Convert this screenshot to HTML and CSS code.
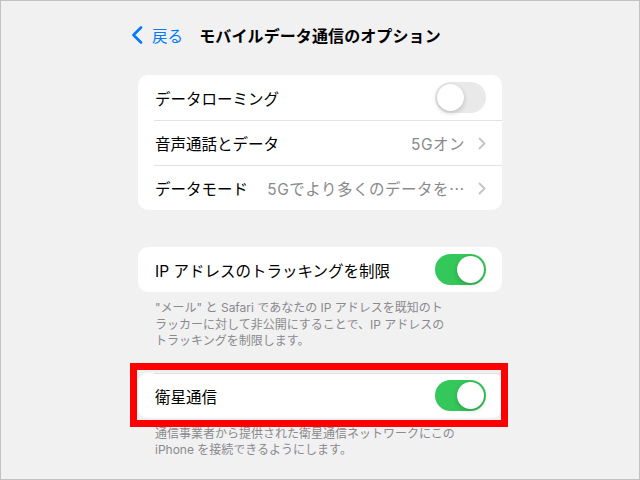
FILE: index.html
```html
<!DOCTYPE html>
<html lang="ja">
<head>
  <meta charset="UTF-8">
  <meta name="viewport" content="width=device-width, initial-scale=1.0">
  <title>モバイルデータ通信のオプション</title>
  <link rel="stylesheet" href="styles.css">
</head>
<body>

<div class="screen">
  <!-- Navigation bar -->
  <div class="nav-bar">
    <a class="back-link" href="#">
      <svg class="back-chevron" width="12" height="18" viewBox="0 0 12 18">
        <path d="M10 1.5 L2.5 9 L10 16.5" fill="none" stroke="#007aff" stroke-width="2.6" stroke-linecap="round" stroke-linejoin="round"/>
      </svg>
      <span>戻る</span>
    </a>
    <h1 class="nav-title">モバイルデータ通信のオプション</h1>
    <div></div>
  </div>

  <div class="content">
    <!-- Roaming / voice / data mode -->
    <div class="group">
      <div class="row">
        <span class="row-label">データローミング</span>
        <span class="toggle"><span class="knob"></span></span>
      </div>
      <div class="row">
        <span class="row-label">音声通話とデータ</span>
        <span class="row-value">5Gオン</span>
        <svg class="chevron" width="8" height="13" viewBox="0 0 8 13">
          <path d="M1.5 1.5 L6.5 6.5 L1.5 11.5" fill="none" stroke="#c4c4c7" stroke-width="1.8" stroke-linecap="round" stroke-linejoin="round"/>
        </svg>
      </div>
      <div class="row">
        <span class="row-label">データモード</span>
        <span class="row-value">5Gでより多くのデータを<span class="ellipsis">…</span></span>
        <svg class="chevron" width="8" height="13" viewBox="0 0 8 13">
          <path d="M1.5 1.5 L6.5 6.5 L1.5 11.5" fill="none" stroke="#c4c4c7" stroke-width="1.8" stroke-linecap="round" stroke-linejoin="round"/>
        </svg>
      </div>
    </div>

    <!-- IP tracking -->
    <div class="group group-ip">
      <div class="row">
        <span class="row-label">IP アドレスのトラッキングを制限</span>
        <span class="toggle on"><span class="knob"></span></span>
      </div>
    </div>
    <p class="footnote">"メール" と Safari であなたの IP アドレスを既知のト<br>ラッカーに対して非公開にすることで、IP アドレスの<br>トラッキングを制限します。</p>

    <!-- Satellite -->
    <div class="group group-sat">
      <div class="highlight"></div>
      <div class="row">
        <span class="row-label">衛星通信</span>
        <span class="toggle on"><span class="knob"></span></span>
      </div>
    </div>
    <p class="footnote">通信事業者から提供された衛星通信ネットワークにこの<br>iPhone を接続できるようにします。</p>
  </div>
</div>

</body>
</html>
```

FILE: styles.css
```css
body {
  margin: 0;
  padding: 0;
  font-family: Inter, "Noto Sans CJK JP", sans-serif;
  color: #000;
}
.screen {
  width: 640px;
  height: 480px;
  box-sizing: border-box;
  border: 1px solid #c2c2c2;
  background-color: #f1f1f1;
  overflow: hidden;
}

/* Navigation bar */
.nav-bar {
  display: grid;
  grid-template-columns: 1fr auto 1fr;
  align-items: center;
  width: 378px;
  height: 36px;
  margin: 16px auto 0;
}
.back-link {
  display: flex;
  align-items: center;
  gap: 9px;
  color: #007aff;
  font-size: 15.5px;
  text-decoration: none;
}
.nav-title {
  margin: 0;
  font-size: 16px;
  font-weight: 700;
  letter-spacing: 0.1px;
}

/* Content */
.content {
  width: 364px;
  margin: 22px auto 0;
}
.group {
  position: relative;
  background-color: #fff;
  border-radius: 10px;
}
.group-ip {
  margin-top: 37px;
}
.group-sat {
  margin-top: 23px;
}
.row {
  display: flex;
  align-items: center;
  height: 45px;
  margin-left: 16px;
  padding-right: 16px;
  font-size: 15.5px;
  border-top: 1px solid #e2e2e4;
  box-sizing: border-box;
}
.row:first-of-type {
  border-top: none;
}
.row-label {
  flex: none;
  padding-left: 1px;
}
.row-value {
  flex: 1;
  text-align: right;
  color: #8a8a8e;
  white-space: nowrap;
  letter-spacing: 0.5px;
}
.ellipsis {
  font-family: "Noto Sans CJK JP", sans-serif;
}
.chevron {
  flex: none;
  margin-left: 13px;
}

/* Switches */
.toggle {
  position: relative;
  flex: none;
  width: 51px;
  height: 31px;
  margin-left: auto;
  border-radius: 16px;
  background-color: #e9e9ea;
}
.toggle .knob {
  position: absolute;
  top: 2px;
  left: 2px;
  width: 27px;
  height: 27px;
  border-radius: 50%;
  background-color: #fff;
  box-shadow: 0 2px 5px rgba(0, 0, 0, 0.18), 0 0 1px rgba(0, 0, 0, 0.12);
}
.toggle.on {
  background-color: #34c759;
}
.toggle.on .knob {
  left: 22px;
}

/* Footnotes */
.footnote {
  margin: 0;
  padding: 8px 16px 0 17px;
  font-size: 12px;
  line-height: 16.5px;
  color: #8a8a8e;
}

/* Red annotation frame */
.highlight {
  position: absolute;
  top: -10px;
  left: -8px;
  right: -6px;
  bottom: -9px;
  border: 7px solid #ff0000;
  pointer-events: none;
}
```
